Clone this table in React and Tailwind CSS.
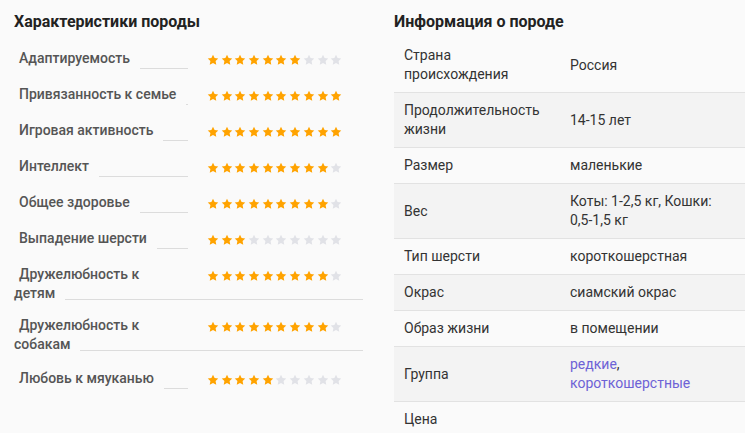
const traits = [
  { label: "Адаптируемость", value: 7 },
  { label: "Привязанность к семье", value: 10 },
  { label: "Игровая активность", value: 10 },
  { label: "Интеллект", value: 9 },
  { label: "Общее здоровье", value: 9 },
  { label: "Выпадение шерсти", value: 3 },
  { label: "Дружелюбность к", rest: "детям", value: 9, h: "h-[51px]" },
  { label: "Дружелюбность к", rest: "собакам", value: 9, h: "h-[53px]" },
  { label: "Любовь к мяуканью", value: 5 },
];

const info = [
  ["Страна происхождения", "Россия"],
  ["Продолжительность жизни", "14-15 лет"],
  ["Размер", "маленькие"],
  ["Вес", "Коты: 1-2,5 кг, Кошки: 0,5-1,5 кг"],
  ["Тип шерсти", "короткошерстная"],
  ["Окрас", "сиамский окрас"],
  ["Образ жизни", "в помещении"],
  ["Группа", null],
  ["Цена", ""],
];

const Star = ({ on }) => (
  <svg viewBox="0 0 24 24" className="h-3 w-3 flex-none">
    <path
      d="M12 1.5l3.2 6.6 7.3 1-5.3 5.1 1.3 7.2L12 18l-6.5 3.4 1.3-7.2L1.5 9.1l7.3-1z"
      fill={on ? "#ffa300" : "#e1e2e7"}
    />
  </svg>
);

const Stars = ({ value }) => (
  <div className="ml-[19px] mt-[5.5px] flex gap-[1.7px]">
    {Array.from({ length: 10 }, (_, i) => (
      <Star key={i} on={i < value} />
    ))}
  </div>
);

export default function App() {
  return (
    <div
      className="flex min-h-[433px] bg-[#fafafa] pl-[14px] text-[14px]"
      style={{ fontFamily: "Roboto, 'Noto Sans', sans-serif" }}
    >
      {/* характеристики */}
      <div className="w-[349px] flex-none">
        <h2 className="pt-[12px] text-[16px] font-bold leading-[19px] text-[#222]">
          Характеристики породы
        </h2>
        <div className="mt-[17.5px] font-medium text-[#555]">
          {traits.map((t, i) =>
            t.rest ? (
              <div key={i} className={t.h}>
                <div className="flex">
                  <div className="w-[174px] pl-[5px] leading-[19px]">{t.label}</div>
                  <Stars value={t.value} />
                </div>
                <div className="flex">
                  <span className="leading-[19px]">{t.rest}</span>
                  <span className="ml-[10px] h-[16px] flex-1 border-b border-[#dcdcdc]" />
                </div>
              </div>
            ) : (
              <div key={i} className="flex h-[36px]">
                <div className="flex w-[174px] items-start">
                  <span className="whitespace-nowrap pl-[5px] leading-[19px]">{t.label}</span>
                  <span className="ml-[10px] h-[20px] flex-1 border-b border-[#dcdcdc]" />
                </div>
                <Stars value={t.value} />
              </div>
            )
          )}
        </div>
      </div>

      {/* информация */}
      <div className="ml-[31px] flex-1">
        <h2 className="pt-[12px] text-[16px] font-bold leading-[19px] text-[#222]">
          Информация о породе
        </h2>
        <table className="mt-[7px] w-full table-fixed border-collapse text-[#333]">
          <tbody>
            {info.map(([k, v], i) => (
              <tr
                key={k}
                className={i % 2 ? "bg-[#f3f3f3]" : "bg-[#fafafa]"}
              >
                <td
                  className={`w-[166px] px-[10px] py-[8px] align-middle leading-[19px] ${
                    i < info.length - 1 ? "border-b border-[#e2e2e2]" : ""
                  }`}
                >
                  {k}
                </td>
                <td
                  className={`px-[10px] py-[8px] align-middle leading-[19px] ${
                    i < info.length - 1 ? "border-b border-[#e2e2e2]" : ""
                  }`}
                >
                  {v === null ? (
                    <>
                      <a className="text-[#6d62d6]">редкие</a>,{" "}
                      <a className="text-[#6d62d6]">короткошерстные</a>
                    </>
                  ) : (
                    v
                  )}
                </td>
              </tr>
            ))}
          </tbody>
        </table>
      </div>
    </div>
  );
}
